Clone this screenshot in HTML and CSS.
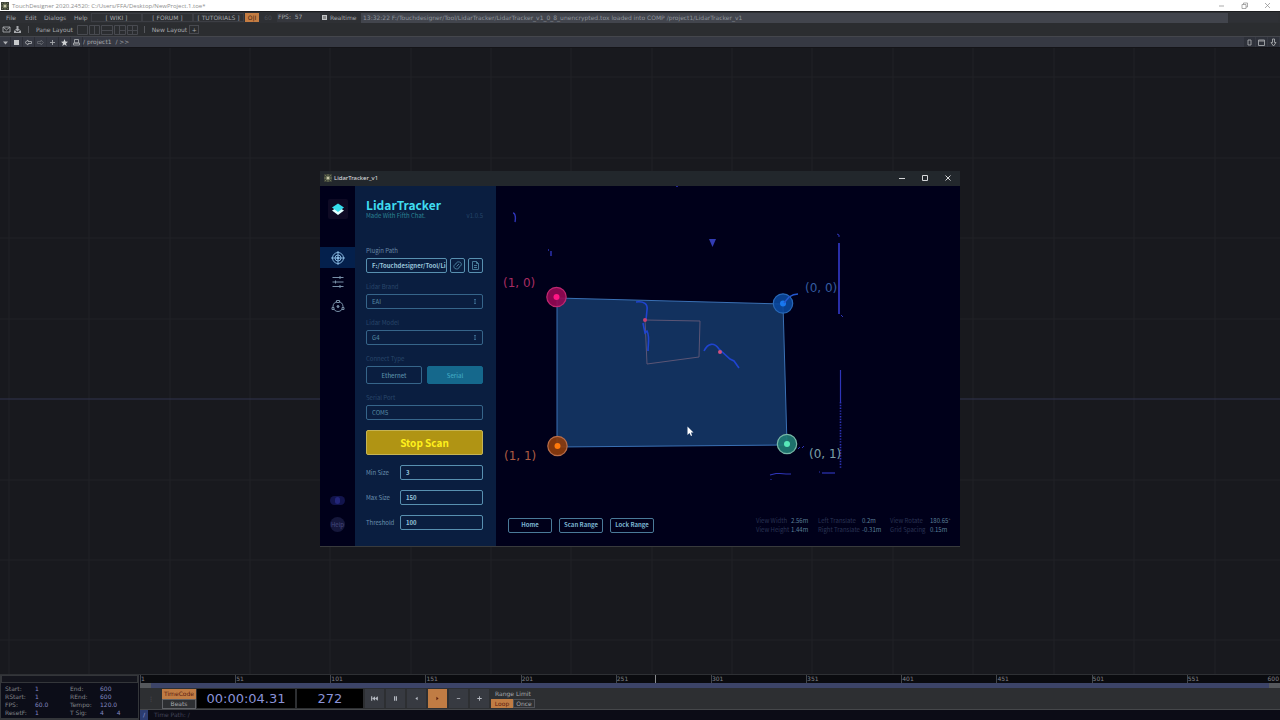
FILE: index.html
```html
<!DOCTYPE html>
<html lang="en">
<head>
<meta charset="utf-8">
<title>TouchDesigner - LidarTracker</title>
<link rel="stylesheet" href="styles.css">
</head>
<body>
<header class="titlebar">
  <svg class="app-icon" viewBox="0 0 8 8"><rect width="8" height="8" fill="#3c4038"/><path d="M4 0V8M0 4H8M1 1L7 7M7 1L1 7" stroke="#7c8a60" stroke-width=".7"/><circle cx="4" cy="4" r="1.500" fill="#c8c8a8"/></svg>
  <span class="titlebar-text">TouchDesigner 2020.24520: C:/Users/FFA/Desktop/NewProject.1.toe*</span>
  <div class="caption">
    <button aria-label="Minimize"><svg viewBox="0 0 7 7"><path d="M1 4H6"/></svg></button>
    <button aria-label="Restore"><svg viewBox="0 0 7 7"><path d="M1 2.500H5V6.500H1ZM2.500 2.500V1H6.500V5H5"/></svg></button>
    <button aria-label="Close"><svg viewBox="0 0 7 7"><path d="M1 1L6 6M6 1L1 6"/></svg></button>
  </div>
</header>

<nav class="menubar">
  <button class="menu menu-file">File</button>
  <button class="menu menu-edit">Edit</button>
  <button class="menu menu-dialogs">Dialogs</button>
  <button class="menu menu-help">Help</button>
  <button class="link-btn">[ WIKI ]</button>
  <button class="link-btn">[ FORUM ]</button>
  <button class="link-btn">[ TUTORIALS ]</button>
  <button class="oi">O|I</button>
  <span class="rate">60</span>
  <span class="fps">FPS:&nbsp; 57</span>
  <label class="realtime"><input type="checkbox" checked>Realtime</label>
  <span class="message">13:32:22 F:/Touchdesigner/Tool/LidarTracker/LidarTracker_v1_0_8_unencrypted.tox loaded into COMP /project1/LidarTracker_v1</span>
  <span class="message-end"></span>
</nav>

<div class="layoutbar">
  <button class="ic" aria-label="Mail"><svg viewBox="0 0 9 9"><path d="M1 2H8V7H1ZM1 2L4.500 5L8 2"/></svg></button>
  <button class="ic" aria-label="Download"><svg viewBox="0 0 9 9"><path d="M3.500 1H5.500V4H7L4.500 6.500L2 4H3.500ZM1 5.500H2.500L3.500 7H5.500L6.500 5.500H8V8H1Z" fill="#a6a8ac" stroke="none"/></svg></button>
  <span class="sep"></span>
  <span class="pane-label">Pane Layout</span>
  <div class="panes">
    <svg viewBox="0 0 62 10"><path d="M.5.5H10.500V9.500H.5ZM12.500.5H22.500V9.500H12.500ZM17.500.5V9.500M24.500.5H35.500V9.500H24.500ZM24.500 5.500H35.500M37.500.5H48.500V9.500H37.500ZM42.500.5V9.500M42.500 5.500H48.500M50.500.5H60.500V9.500H50.500ZM55.500.5V9.500M50.500 5.500H60.500"/></svg>
  </div>
  <span class="sep"></span>
  <span class="new-label">New Layout</span>
  <button class="plus" aria-label="Add layout">+</button>
</div>

<div class="pathbar">
  <button class="ic" aria-label="Menu"><svg viewBox="0 0 9 9"><path d="M2 3.500H7L4.500 6.500Z" fill="#b0b2b6" stroke="none"/></svg></button>
  <button class="ic" aria-label="Stop"><svg viewBox="0 0 9 9"><path d="M2 2H7V7H2Z" fill="#c8cacc" stroke="none"/></svg></button>
  <button class="ic" aria-label="Back"><svg viewBox="0 0 9 9"><path d="M1 4.500L4 2V3.500H7.500V5.500H4V7Z"/></svg></button>
  <button class="ic faint" aria-label="Forward"><svg viewBox="0 0 9 9"><path d="M7.500 4.500L5 2V3.500H1.500V5.500H5V7Z"/></svg></button>
  <button class="ic" aria-label="Add"><svg viewBox="0 0 9 9"><path d="M4.500 2V7M2 4.500H7"/></svg></button>
  <button class="ic" aria-label="Bookmark"><svg viewBox="0 0 9 9"><path d="M4.500 1L5.500 3.500L8 3.700L6 5.400L6.700 8L4.500 6.500L2.300 8L3 5.400L1 3.700L3.500 3.500Z" fill="#d0d2d4" stroke="none"/></svg></button>
  <button class="ic" aria-label="Home"><svg viewBox="0 0 9 9"><path d="M2.500 1.500H6.500V5H2.500ZM1.500 5H7.500V7H1.500Z"/></svg></button>
  <span class="path">/ project1&nbsp; / &gt;&gt;</span>
  <div class="path-right">
    <button class="ic" aria-label="Zero"><svg viewBox="0 0 9 9"><path d="M3 2H6V7H3Z"/></svg></button>
    <button class="ic" aria-label="Maximize"><svg viewBox="0 0 9 9"><path d="M1.500 2H7.500V7.500H1.500ZM1.500 3H7.500"/></svg></button>
    <button class="ic" aria-label="Pull down"><svg viewBox="0 0 9 9"><path d="M3.500 1H5.500V4.500H7L4.500 8L2 4.500H3.500Z"/></svg></button>
  </div>
</div>

<main class="network">
  <svg class="grid" viewBox="0 0 1280 626" preserveAspectRatio="xMidYMin slice" aria-hidden="true">
    <path d="M9 0V626M89 0V626M170 0V626M250 0V626M330 0V626M411 0V626M491 0V626M571 0V626M652 0V626M732 0V626M812 0V626M893 0V626M973 0V626M1054 0V626M1134 0V626M1215 0V626M0 29H1280M0 110H1280M0 190H1280M0 271H1280M0 432H1280M0 512H1280M0 592H1280"/>
    <path class="axis" d="M0 351H1280"/>
  </svg>

  <section class="win">
    <div class="win-title">
      <svg class="app-icon" viewBox="0 0 8 8"><rect width="8" height="8" fill="#3c4038"/><path d="M4 0V8M0 4H8M1 1L7 7M7 1L1 7" stroke="#7c8a60" stroke-width=".7"/><circle cx="4" cy="4" r="1.500" fill="#c8c8a8"/></svg>
      <span>LidarTracker_v1</span>
      <div class="win-caption">
        <button aria-label="Minimize window"><svg viewBox="0 0 8 8"><path d="M1 4.500H7"/></svg></button>
        <button aria-label="Maximize window"><svg viewBox="0 0 8 8"><path d="M1.500 1.500H6.500V6.500H1.500Z"/></svg></button>
        <button aria-label="Close window"><svg viewBox="0 0 8 8"><path d="M1.500 1.500L6.500 6.500M6.500 1.500L1.500 6.500"/></svg></button>
      </div>
    </div>
    <div class="win-body">
      <nav class="rail">
        <span class="logo"><svg viewBox="0 0 20 20"><path d="M4 11.500L10 8L16 11.500L10 16Z" fill="#e4ffff"/><path d="M4 8.500L10 4.500L16 8.500L10 13Z" fill="#35dcec"/></svg></span>
        <button class="rail-btn active" aria-label="Lidar"><svg viewBox="0 0 14 14"><circle cx="7" cy="7" r="5.500"/><circle cx="7" cy="7" r="3"/><path d="M7 0V14M0 7H14"/><circle cx="7" cy="7" r="1" fill="#8fc0e8"/></svg></button>
        <button class="rail-btn" aria-label="Settings"><svg viewBox="0 0 14 14"><path d="M1.500 2.500H12.500M1.500 7H12.500M1.500 11.500H12.500M9 1V4M4.500 5.500V8.500M9 10V13"/></svg></button>
        <button class="rail-btn" aria-label="Tracking"><svg viewBox="0 0 14 14"><circle cx="7" cy="7.500" r="5"/><path d="M5.500 1.500H8.500V3.500H5.500ZM1 8.500H3V10.500H1ZM11 8.500H13V10.500H11Z" fill="#000018"/><circle cx="7" cy="7.500" r="1" fill="#7890a8"/></svg></button>
        <button class="lang" aria-label="Language"><i></i></button>
        <button class="help">Help</button>
      </nav>

      <form class="panel">
        <div class="brand">
          <h1>LidarTracker</h1>
          <div class="sub"><span>Made With Fifth Chat.</span><span class="ver">v1.0.5</span></div>
        </div>
        <div class="field">
          <label for="plugin">Plugin Path</label>
          <div class="row">
            <input id="plugin" class="box bold" value="F:/Touchdesigner/Tool/LidarTracker">
            <button type="button" class="box mini" aria-label="Reload"><svg viewBox="0 0 11 11"><path d="M3 8.500C.8 7 2 4.500 4 4C4.500 1.500 7 1.500 8.500 2.500C10 4 9.500 6 7.500 6.500C7 9 5 9.500 3 8.500M4.500 6.500L7 4"/></svg></button>
            <button type="button" class="box mini" aria-label="Open file"><svg viewBox="0 0 11 11"><path d="M2.500 1.500H6.500L8.500 3.500V9.500H2.500ZM6.500 1.500V3.500H8.500M4 5.500H7M4 7.500H7"/></svg></button>
          </div>
        </div>
        <div class="field dim">
          <label for="brand">Lidar Brand</label>
          <div class="select"><select id="brand" class="box"><option>EAI</option></select><svg viewBox="0 0 6 9"><path d="M2 3L3 2L4 3M3 2V7M2 6L3 7L4 6"/></svg></div>
        </div>
        <div class="field dim">
          <label for="model">Lidar Model</label>
          <div class="select"><select id="model" class="box"><option>G4</option></select><svg viewBox="0 0 6 9"><path d="M2 3L3 2L4 3M3 2V7M2 6L3 7L4 6"/></svg></div>
        </div>
        <div class="field dim">
          <span class="cap">Connect Type</span>
          <div class="row wide"><button type="button" class="box conn">Ethernet</button><button type="button" class="box conn on">Serial</button></div>
        </div>
        <div class="field dim port">
          <label for="port">Serial Port</label>
          <input id="port" class="box" value="COM5">
        </div>
        <button type="button" class="stop">Stop Scan</button>
        <div class="num"><label for="min">Min Size</label><input id="min" class="box bold" value="3"></div>
        <div class="num"><label for="max">Max Size</label><input id="max" class="box bold" value="150"></div>
        <div class="num"><label for="thr">Threshold</label><input id="thr" class="box bold" value="100"></div>
      </form>

      <div class="view">
        <svg class="scan" viewBox="0 0 464 360" preserveAspectRatio="xMinYMin meet">
          <path d="M61 112L287 118L291 259L61 261Z" fill="#12315e" stroke="#3a70b4"/>
          <g fill="none" stroke="#2e34b8">
            <path d="M17 27C19 27 20 31 19 36M52 64H53M55 65V70M180 0H182" stroke-width="1.400"/>
            <path d="M341 48L343 49V51M345 129L347 131M302 263L304 261M306 262L308 260M275 293V294M323 286H324"/>
            <path d="M343 57V128" stroke-width="1.800"/>
            <path d="M344.500 184V216" stroke-width="1.200"/>
            <path d="M344.500 216V283" stroke-width="1.600" stroke-dasharray="1.400 1.400"/>
            <path d="M274 289L280 287.500H284L290 288H295" stroke-width="1.200"/>
            <path d="M326 287H339" stroke-width="1.200"/>
          </g>
          <path d="M149 134L204 135L203 171L151 178Z" fill="none" stroke="#5b5575"/>
          <g fill="none" stroke="#1f44d0" stroke-width="1.600">
            <path d="M140 116C148 115 152 118 151 124L150 134M147 137L149 147L151 145C154 151 152 158 152 165"/>
            <path d="M208 165C212 157 218 156 223 163L234 173L238 175L243 182"/>
          </g>
          <circle cx="149" cy="134" r="2" fill="#c84070"/><circle cx="224" cy="166" r="2" fill="#d05080"/>
          <g stroke-width="1.200">
            <circle cx="60.500" cy="111" r="9.700" fill="#960854" fill-opacity=".9" stroke="#bd2870"/><circle cx="60.500" cy="111" r="3" fill="#ff1684"/>
            <circle cx="287" cy="117.500" r="9.700" fill="#0a479c" fill-opacity=".9" stroke="#2868b8"/><circle cx="287" cy="117.500" r="3" fill="#1878f0"/>
            <circle cx="61.500" cy="260" r="9.700" fill="#8e3c0c" fill-opacity=".9" stroke="#b86c48"/><circle cx="61.500" cy="260" r="3" fill="#ff7a0c"/>
            <circle cx="291" cy="258" r="9.700" fill="#207c74" fill-opacity=".9" stroke="#78b8a8"/><circle cx="291" cy="258" r="3" fill="#58e8b8"/>
          </g>
          <path d="M288 117L293 111C296 109 299 108 302 108" fill="none" stroke="#2458d0" stroke-width="1.500"/>
          <path d="M213 53H220L216.500 61Z" fill="#323cb4"/>
          <g class="coords">
            <text x="7" y="101" fill="#a82c62">(1, 0)</text>
            <text x="309" y="106" fill="#355ca0">(0, 0)</text>
            <text x="8" y="274" fill="#ac5c42">(1, 1)</text>
            <text x="313" y="272" fill="#7ba0a8">(0, 1)</text>
          </g>
          <path d="M191.500 240.500V249L193.500 247L195 250L196 249.500L195 246.500H197.500Z" fill="#fff"/>
        </svg>
        <div class="view-foot">
          <div class="view-btns"><button>Home</button><button>Scan Range</button><button>Lock Range</button></div>
          <div class="stats">
            <dl class="s1"><dt>View Width</dt><dd>2.56m</dd><dt>View Height</dt><dd>1.44m</dd></dl>
            <dl class="s2"><dt>Left Translate</dt><dd>0.2m</dd><dt>Right Translate</dt><dd>-0.31m</dd></dl>
            <dl class="s3"><dt>View Rotate</dt><dd>180.65°</dd><dt>Grid Spacing</dt><dd>0.15m</dd></dl>
          </div>
        </div>
      </div>
    </div>
  </section>
</main>

<footer class="timeline">
  <div class="info">
    <div class="info-top"></div>
    <dl>
      <dt>Start:</dt><dd>1</dd><dt>End:</dt><dd>600</dd>
      <dt>RStart:</dt><dd>1</dd><dt>REnd:</dt><dd>600</dd>
      <dt>FPS:</dt><dd>60.0</dd><dt>Tempo:</dt><dd>120.0</dd>
      <dt>ResetF:</dt><dd>1</dd><dt>T Sig:</dt><dd class="sig"><span>4</span><span>4</span></dd>
    </dl>
  </div>
  <div class="time-main">
    <div class="ruler">
      <span>1</span><span>51</span><span>101</span><span>151</span><span>201</span><span class="play-at">251</span><span>301</span><span>351</span><span>401</span><span>451</span><span>501</span><span class="last">551<b>600</b></span>
    </div>
    <div class="range"><i></i><i></i></div>
    <div class="transport">
      <span class="lead">⋮</span>
      <div class="modes"><button class="on">TimeCode</button><button>Beats</button></div>
      <output class="lcd code">00:00:04.31</output>
      <output class="lcd frame">272</output>
      <div class="keys">
        <button aria-label="Rewind"><svg viewBox="0 0 8 8"><path d="M1 2H2V6H1ZM4.500 2V6L2 4ZM7 2V6L4.500 4Z"/></svg></button>
        <button aria-label="Pause"><svg viewBox="0 0 8 8"><path d="M2.700 2H3.700V6H2.700ZM4.300 2H5.300V6H4.300Z"/></svg></button>
        <button aria-label="Reverse"><svg viewBox="0 0 8 8"><path d="M5 2.400V5.600L3 4Z"/></svg></button>
        <button class="on" aria-label="Play"><svg viewBox="0 0 8 8"><path d="M3 2.400V5.600L5 4Z"/></svg></button>
        <button aria-label="Slower"><svg viewBox="0 0 8 8"><path d="M2.500 3.700H5.500V4.400H2.500Z"/></svg></button>
        <button aria-label="Faster"><svg viewBox="0 0 8 8"><path d="M2 3.600H3.600V2H4.400V3.600H6V4.400H4.400V6H3.600V4.400H2Z"/></svg></button>
      </div>
      <div class="limit"><span>Range Limit</span><div><button class="on">Loop</button><button>Once</button></div></div>
    </div>
    <div class="tpath"><b>/</b><span>Time Path: /</span></div>
  </div>
</footer>
</body>
</html>
```
FILE: styles.css
```css
* { box-sizing: border-box; }
body {
  margin: 0; height: 100vh; display: flex; flex-direction: column; overflow: hidden;
  background: #18191e; color: #a6a8ac;
  font: 6px/8px "DejaVu Sans", sans-serif;
}
button, input, select, output { font: inherit; color: inherit; margin: 0; padding: 0; border: 0; background: none; }
svg { display: block; }
dl, dd, dt, h1 { margin: 0; }

.titlebar { display: flex; align-items: center; height: 11px; padding-left: 1px; background: #fff; color: #8d8d8d; font-family: "Open Sans", sans-serif; }
.app-icon { width: 8px; height: 8px; }
.titlebar-text { margin-left: 3px; }
.caption { margin-left: auto; display: flex; gap: 16px; padding-right: 9px; }
.caption button { width: 7px; }
.caption svg { fill: none; stroke: #888; stroke-width: .7; }

.menubar { display: flex; align-items: center; height: 12px; border-top: 1px solid #1c1d20; background: #2e3034; }
.menubar > * { white-space: nowrap; }
.menu { text-align: left; }
.menu-file { width: 25px; padding-left: 6px; }
.menu-edit { width: 19px; }
.menu-dialogs { width: 30px; }
.menu-help { width: 17px; }
.link-btn { width: 51px; height: 9px; border: 1px solid #3c3e44; line-height: 7px; }
.oi { width: 14px; height: 9px; margin-left: 1px; background: #c47c42; color: #3a2010; }
.rate { width: 18px; text-align: center; color: #4c4e54; }
.fps { width: 43px; height: 9px; padding-left: 1px; background: #35373d; }
.realtime { display: flex; align-items: center; gap: 3px; width: 41px; padding-left: 2px; }
.realtime input { appearance: none; width: 5px; height: 5px; border: 1px solid #c0c2c4; background: #888; }
.message { flex: 1; padding-left: 2px; height: 10px; line-height: 10px; background: #42454d; color: #8f949c; overflow: hidden; }
.message-end { width: 49px; height: 9px; margin: 0 2px 0 1px; background: #2f3136; }

.layoutbar { display: flex; align-items: center; height: 13px; background: #2b2d30; }
.ic { width: 11px; height: 11px; display: flex; align-items: center; justify-content: center; color: #a6a8ac; }
.ic svg { width: 9px; height: 9px; fill: none; stroke: #a6a8ac; stroke-width: .9; }
.layoutbar .ic:first-child { margin-left: 1px; }
.sep { width: 1px; height: 7px; margin: 0 7px 0 5px; background: #55575c; }
.panes { width: 62px; margin-left: 4px; }
.panes svg { fill: none; stroke: #484a50; }
.plus { width: 10px; height: 9px; margin-left: 2px; border: 1px solid #484a50; line-height: 6px; }

.pathbar { display: flex; align-items: center; height: 12px; border-top: 1px solid #44464c; border-bottom: 1px solid #141418; background: #363943; }
.pathbar .ic { height: 10px; }
.pathbar > .ic { width: 12px; border-right: 1px solid #2c2e36; }
.pathbar > .ic:first-child { width: 11px; }
.faint { opacity: .4; }
.path-right { display: flex; gap: 1px; margin-left: auto; padding-right: 1px; }
.path-right .ic { background: #2e313a; }

.network { flex: 1; min-height: 0; position: relative; overflow: hidden; }
.grid { position: absolute; inset: 0; width: 100%; height: 100%; fill: none; stroke: #202227; }
.grid path { stroke-width: 1; }
.axis { stroke: #30354f; }

/* Floating tool window */
.win { position: absolute; left: 25%; top: 123px; width: 50%; border-bottom: 1px solid #383a3c; background: #00001a; font-family: "Noto Sans CJK SC", "Noto Sans", sans-serif; color: #86a9c4; }
.win-title { display: flex; align-items: center; height: 15px; padding: 0 8px 1px 4px; gap: 2px; background: #22272c; color: #e0e2e4; font-family: "Noto Sans", sans-serif; }
.win-caption { display: flex; gap: 15px; margin-left: auto; }
.win-caption button { width: 8px; }
.win-caption svg { fill: none; stroke: #d4d6d8; }
.win-body { display: grid; grid-template-columns: 35px 141px 1fr; }

.rail { display: flex; flex-direction: column; align-items: center; padding: 13px 0 14px; }
.logo { width: 20px; height: 20px; margin-bottom: 28px; border-radius: 2px; background: #0e0a24; }
.rail-btn { width: 100%; height: 21px; margin-bottom: 3px; display: flex; align-items: center; justify-content: center; }
.rail-btn svg { width: 14px; height: 14px; fill: none; stroke: #7890a8; }
.rail-btn.active { background: #04204c; }
.rail-btn.active svg { stroke: #8fc0e8; stroke-width: .9; }
.lang { display: flex; align-items: center; justify-content: center; width: 15px; height: 9px; margin-top: auto; border-radius: 5px; background: #12144c; }
.lang i { width: 5px; height: 7px; border-radius: 3px; background: #23267a; }
.help { width: 15px; height: 15px; margin-top: 12px; border-radius: 50%; background: #15173c; color: #45487c; }

.panel { display: flex; flex-direction: column; gap: 10px; padding: 12px 13px 16px 11px; background: #0a1e40; }
.brand { height: 38px; }
.panel h1 { font-size: 12px; line-height: 14px; color: #3fdcf0; }
.sub { display: flex; justify-content: space-between; line-height: 8px; color: #2a8494; }
.ver { color: #24456a; }
.field { display: flex; flex-direction: column; gap: 2px; margin-bottom: -1px; }
.field.port { margin-bottom: 0; }
.field label, .cap { line-height: 10px; color: #6686a4; }
.dim label, .dim .cap { color: #29466a; }
.row { display: flex; gap: 3px; }
.row.wide { gap: 5px; }
.box { width: 100%; min-width: 0; height: 15px; padding: 0 5px; border: 1px solid #5890b0; border-radius: 2px; color: #98c4da; line-height: 13px; }
.bold { font-weight: 700; }
.dim .box { border-color: #36658a; color: #568aa4; }
.box.mini { flex: 0 0 15px; padding: 1px; }
.mini svg { fill: none; stroke: #4f86a4; stroke-width: .9; }
.row > input { flex: 1; padding-right: 0; }
.select { position: relative; }
select.box { display: block; appearance: none; }
.select svg { position: absolute; right: 5px; top: 3px; width: 6px; height: 9px; fill: none; stroke: #36658a; pointer-events: none; }
.box.conn { flex: 1; height: 18px; padding: 0; font-weight: 500; }
.dim .box.on { border-color: #15688c; background: #15688c; color: #3fa6c0; }
.stop { height: 25px; border: 1px solid #c6b454; border-radius: 2px; background: #b09414; color: #fff01c; font-size: 10px; font-weight: 700; line-height: 20px; }
.num { display: grid; grid-template-columns: 34px 1fr; align-items: center; color: #6c93b0; }

.view { display: grid; min-width: 0; }
.scan { grid-area: 1 / 1; width: 100%; height: 100%; min-height: 0; }
.coords { font: 12px "DejaVu Sans", sans-serif; }
.view-foot { grid-area: 1 / 1; align-self: end; display: flex; align-items: center; justify-content: space-between; padding: 0 6px 12px 12px; }
.view-btns { display: flex; gap: 7px; }
.view-btns button { width: 44px; height: 15px; border: 1px solid #4a7a98; border-radius: 2px; color: #7ab4d0; font-weight: 700; white-space: nowrap; line-height: 12px; }
.stats { display: flex; gap: 15px; color: #2a3454; }
.stats dl { display: grid; align-content: start; line-height: 9px; white-space: nowrap; }
.s1 { grid-template-columns: 35px 12px; }
.s2 { grid-template-columns: 44px 13px; }
.s3 { grid-template-columns: 40px 24px; }
.stats dd { color: #5a7f98; }

/* Timeline */
.timeline { display: flex; height: 46px; border-top: 1px solid #2e3034; background: #0c0c16; }
.info { width: 139px; padding: 1px 1px 2px; background: #34363a; }
.info-top { height: 6px; margin: 0 1px 1px; background: #14151d; }
.info dl { display: grid; grid-template-columns: 30px 35px 30px 1fr; height: 35px; padding: 2px 0 1px 4px; background: #0c0d18; align-content: space-between; color: #82858a; }
.info dd { color: #8288c0; }
.sig { display: flex; gap: 13px; }
.time-main { flex: 1; display: flex; flex-direction: column; min-width: 0; margin-left: 1px; }
.ruler { display: flex; height: 8px; background: #0a0b0f; color: #808288; }
.ruler span { flex: 50 1 0; position: relative; border-left: 1px solid #44464a; }
.ruler .last { flex-grow: 49; display: flex; justify-content: space-between; }
.last b { font-weight: 400; padding-right: 1px; }
.play-at::after { content: ""; position: absolute; left: 41%; top: 0; width: 1px; height: 8px; background: #8a8c90; }
.range { display: flex; justify-content: space-between; height: 5px; background: #3c4468; }
.range i { width: 11px; background: #55585c; }
.transport { display: flex; align-items: center; height: 22px; border-bottom: 1px solid #45474a; background: #2d2f32; }
.lead { width: 22px; text-align: center; color: #66686c; }
.modes { width: 34px; }
.modes button { display: block; width: 100%; height: 10px; border: 1px solid #606266; }
.transport .on { background: #c07c44; border-color: #c07c44; color: #5c2010; }
.lcd { height: 19px; background: #000; color: #8a92d8; font-size: 13px; line-height: 19px; text-align: center; }
.code { width: 98px; margin-left: 1px; }
.frame { width: 66px; margin-left: 2px; }
.keys { display: flex; gap: 2px; margin-left: 2px; }
.keys button { display: flex; align-items: center; justify-content: center; width: 19px; height: 19px; background: #373a41; }
.keys svg { width: 9px; height: 9px; fill: #b8bcc4; }
.keys .on svg { fill: #5c2010; }
.limit { margin-left: 2px; }
.limit > span { display: block; padding-left: 4px; line-height: 10px; }
.limit div { display: flex; }
.limit button { width: 22px; height: 9px; border: 1px solid #505258; line-height: 7px; }
.tpath { display: flex; flex: 1; align-items: center; color: #44465a; }
.tpath b { width: 8px; height: 100%; background: #2c3c70; color: #8288c0; text-align: center; line-height: 9px; }
.tpath span { padding-left: 6px; }
```
